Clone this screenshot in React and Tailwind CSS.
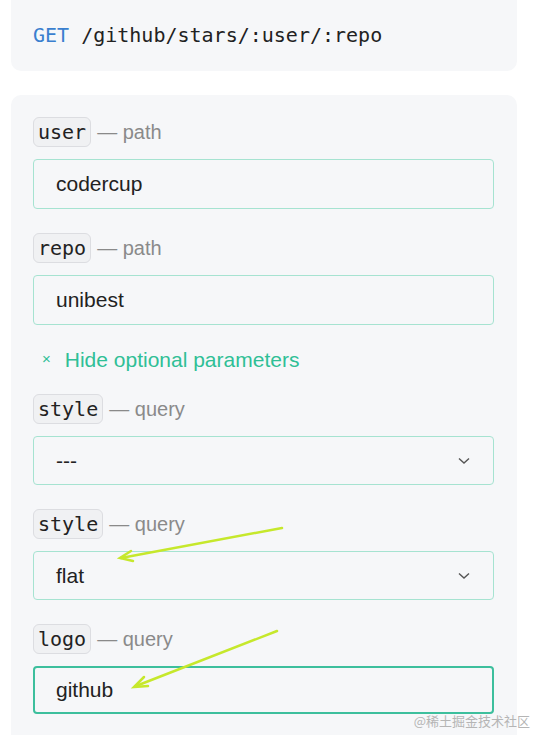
import React from "react";

const mono = { fontFamily: '"DejaVu Sans Mono", monospace' };

function Label({ name, kind }) {
  return (
    <div className="flex items-center h-[30px]">
      <span
        className="font-['DejaVu_Sans_Mono',monospace] text-[20px] leading-[28px] text-[#222] bg-[#f0f1f3] border border-[#dcdde1] rounded-[6px] px-[4px]"
      >
        {name}
      </span>
      <span className="ml-[6px] text-[20px] text-[#8a8a8a] font-['Liberation_Sans',Arial,sans-serif]">
        — {kind}
      </span>
    </div>
  );
}

function TextInput({ value, focused }) {
  return (
    <div
      className={
        focused
          ? "mt-[12px] h-[48px] border-2 border-[#3dbf9d] rounded-[4px] flex items-center pl-[21px] text-[21px] text-[#222]"
          : "mt-[12px] h-[50px] border border-[#a6e3d1] rounded-[4px] flex items-center pl-[22px] text-[21px] text-[#222]"
      }
    >
      {value}
    </div>
  );
}

function Select({ value }) {
  return (
    <div className="mt-[12px] h-[49px] border border-[#a6e3d1] rounded-[4px] flex items-center justify-between pl-[22px] pr-[23px] text-[21px] text-[#222]">
      <span>{value}</span>
      <svg width="12" height="8" viewBox="0 0 12 8" fill="none">
        <path d="M1 1.5 L6 6 L11 1.5" stroke="#555" strokeWidth="1.4" />
      </svg>
    </div>
  );
}

export default function App() {
  return (
    <div className="relative w-[538px] h-[735px] bg-white overflow-hidden font-['Liberation_Sans',Arial,sans-serif]">
      <div className="mx-[11px] w-[506px] h-[71px] bg-[#f6f7f9] rounded-b-[10px] flex items-center pl-[22px] pb-[1px]">
        <span style={mono} className="text-[20px] text-[#222] whitespace-pre">
          <span className="text-[#3a7fcf]">GET</span> /github/stars/:user/:repo
        </span>
      </div>

      <div className="mx-[11px] mt-[24px] w-[506px] h-[700px] bg-[#f6f7f9] rounded-[10px] pl-[22px] pr-[23px] pt-[22px]">
        <Label name="user" kind="path" />
        <TextInput value="codercup" />

        <div className="mt-[24px]">
          <Label name="repo" kind="path" />
          <TextInput value="unibest" />
        </div>

        <div className="h-[69px] flex items-center text-[21px] text-[#2fbf96]">
          <span className="ml-[9px] mr-[14px] text-[15px]">×</span>
          <span>Hide optional parameters</span>
        </div>

        <Label name="style" kind="query" />
        <Select value="---" />

        <div className="mt-[24px]">
          <Label name="style" kind="query" />
          <Select value="flat" />
        </div>

        <div className="mt-[24px]">
          <Label name="logo" kind="query" />
          <TextInput value="github" focused />
        </div>
      </div>

      <svg className="absolute left-0 top-0 pointer-events-none" width="538" height="735">
        <g stroke="#c6e82c" strokeWidth="2.5" strokeLinecap="round" fill="none">
          <line x1="282" y1="528" x2="121" y2="558" />
          <path d="M131 551 L120 558 L133 561" />
          <line x1="277" y1="631" x2="136" y2="686" />
          <path d="M144 677 L134 687 L148 686" />
        </g>
      </svg>

      <div className="absolute right-[8px] bottom-[5px] text-[13px] text-[#b5b5b5] font-['Noto_Sans_CJK_SC',sans-serif]">
        @稀土掘金技术社区
      </div>
    </div>
  );
}
